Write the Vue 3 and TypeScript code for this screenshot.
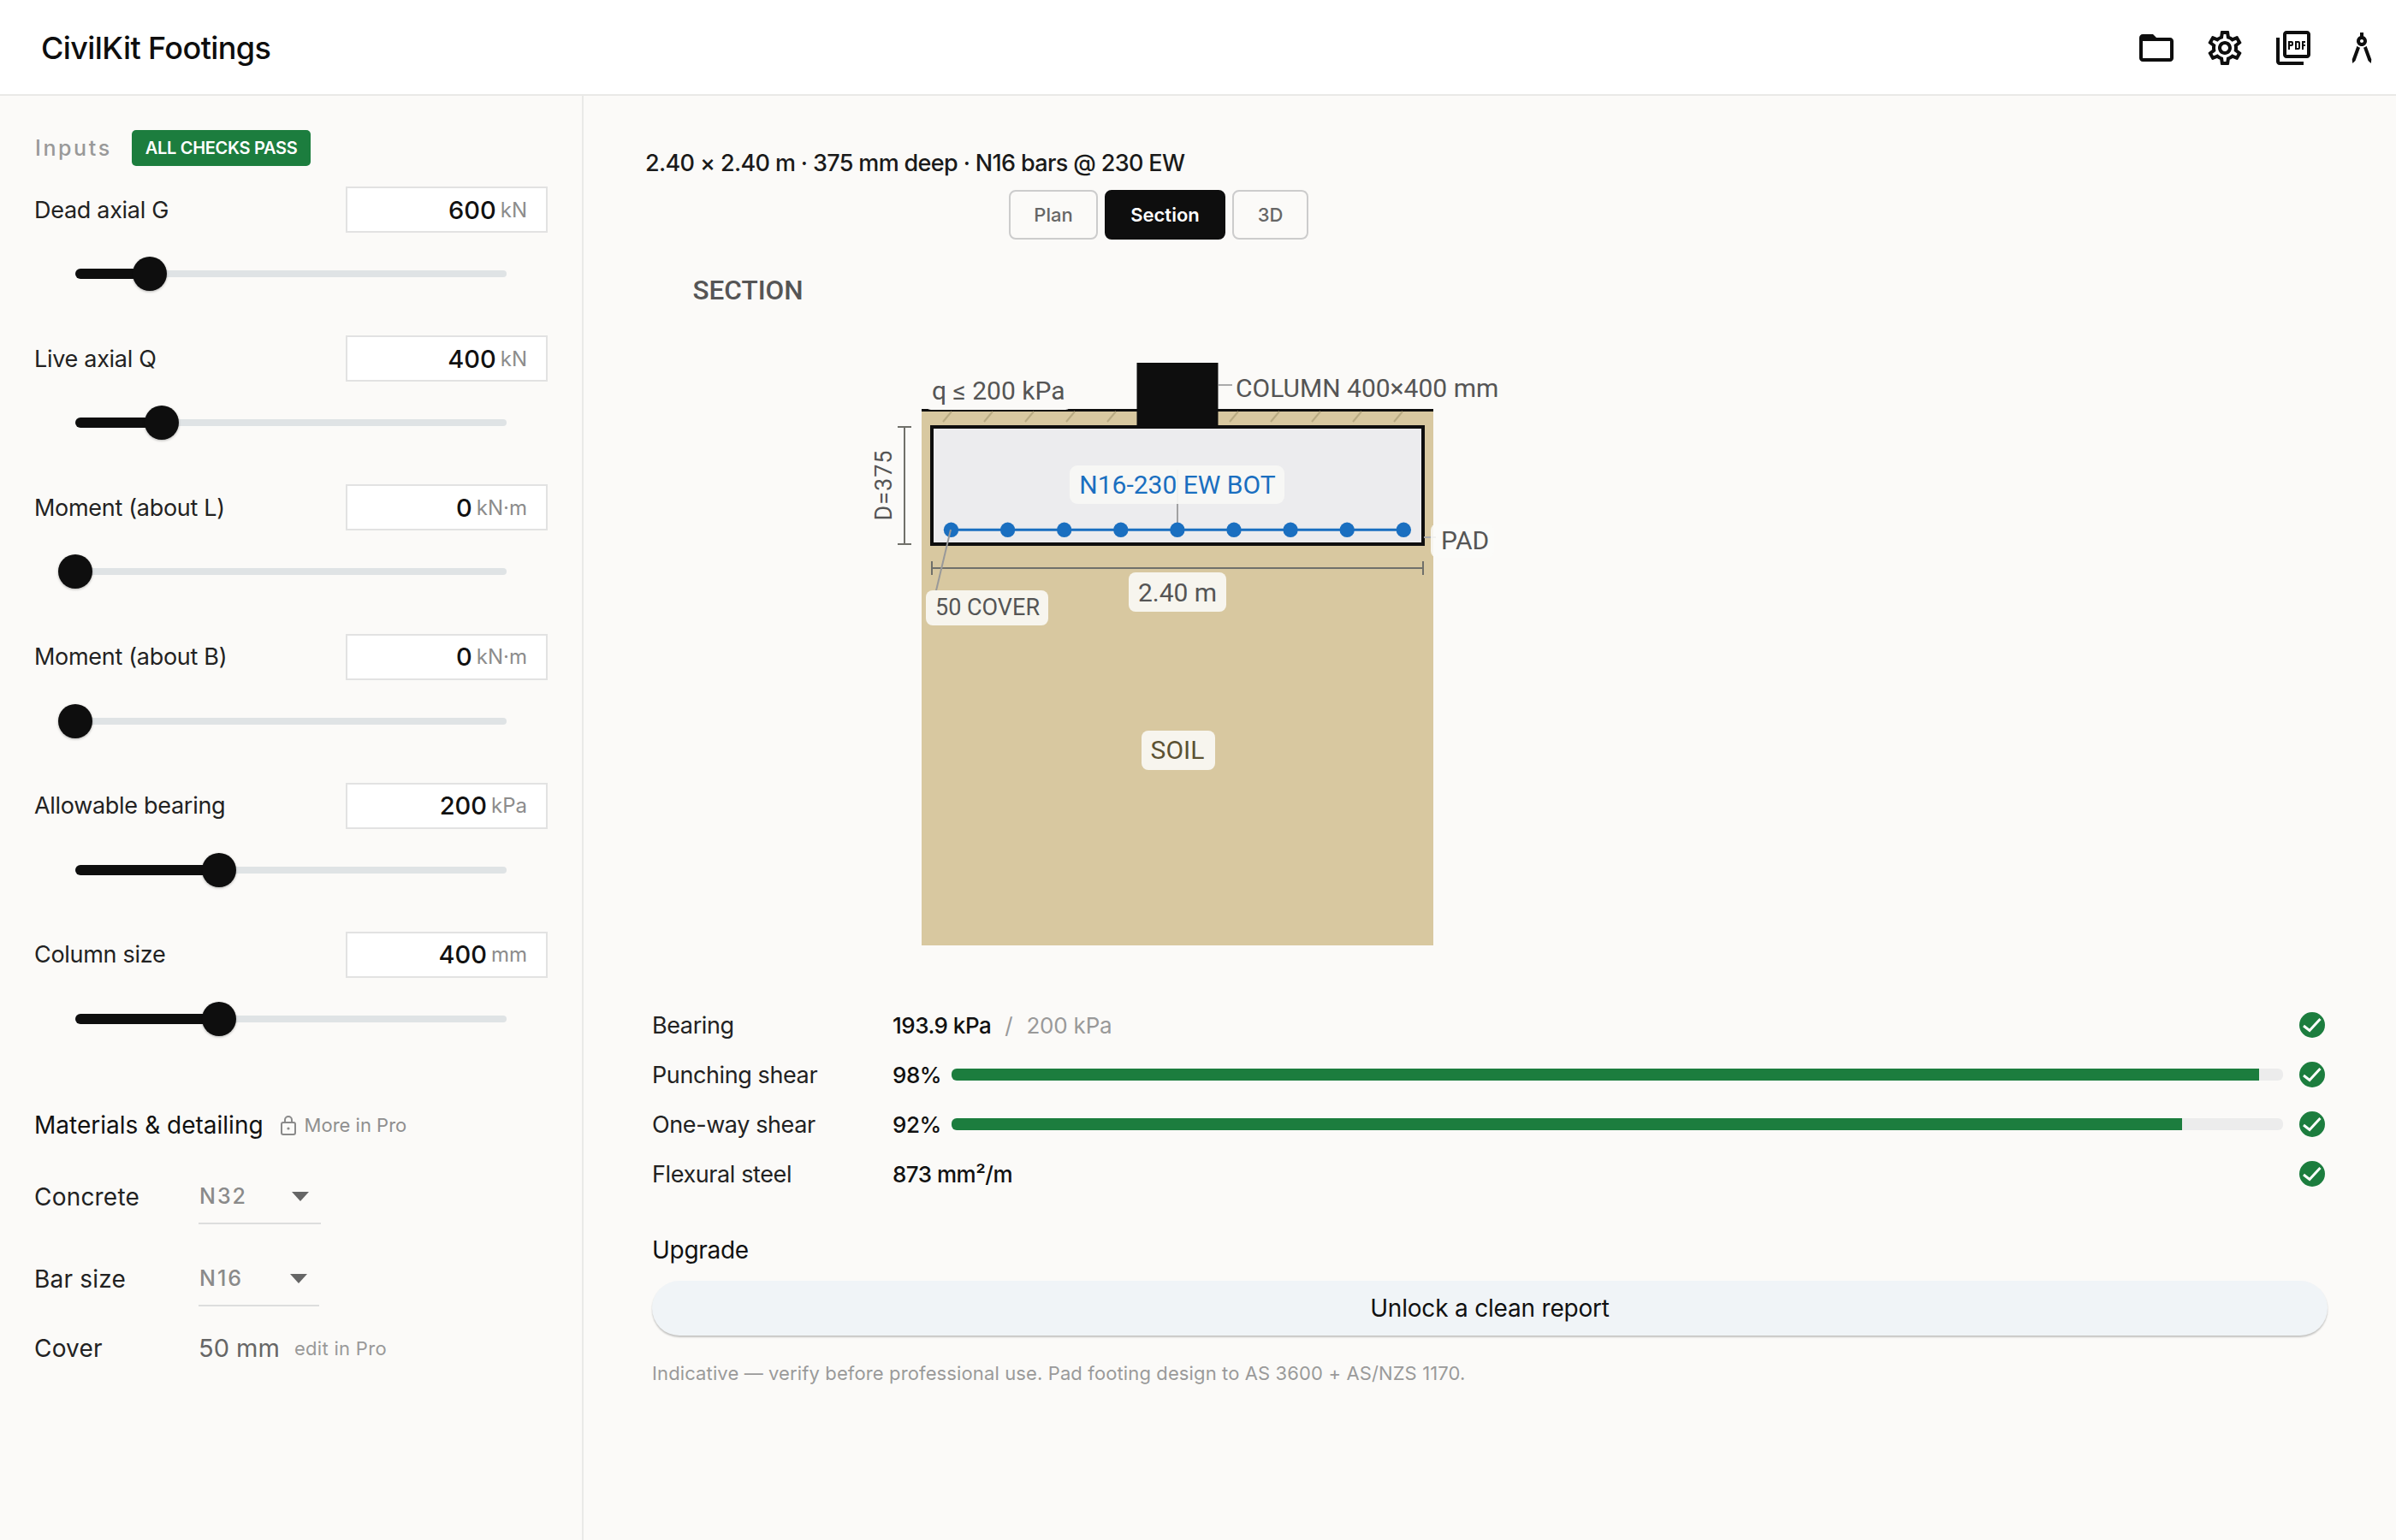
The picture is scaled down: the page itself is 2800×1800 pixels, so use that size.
<template>
  <div class="app">
    <header class="topbar">
      <h1 class="brand">CivilKit Footings</h1>
      <div class="actions">
        <svg v-for="icon in icons" :key="icon" class="action" viewBox="0 0 24 24"><path :d="icon" /></svg>
      </div>
    </header>

    <div class="body">
      <aside class="sidebar">
        <div class="inputs-head">
          <span class="inputs-title">Inputs</span>
          <span class="badge">ALL CHECKS PASS</span>
        </div>

        <div v-for="field in fields" :key="field.label" class="field">
          <div class="field-row">
            <label class="field-label">{{ field.label }}</label>
            <div class="field-box">
              <span class="field-value">{{ field.value }}</span>
              <span class="field-unit">{{ field.unit }}</span>
            </div>
          </div>
          <div class="slider">
            <div class="slider-fill" :style="{ width: field.pos + 'px' }"></div>
            <div class="slider-thumb" :style="{ left: field.pos + 'px' }"></div>
          </div>
        </div>

        <div class="materials-head">
          <span class="materials-title">Materials &amp; detailing</span>
          <svg class="lock" viewBox="0 0 18 24">
            <rect x="1" y="9" width="16" height="14" rx="2" />
            <path d="M5 9V6a4 4 0 0 1 8 0v3" />
            <circle cx="9" cy="16" r="1.6" />
          </svg>
          <span class="pro-note">More in Pro</span>
        </div>
        <div class="material concrete">
          <span class="material-label">Concrete</span>
          <div class="select select-wide"><span>N32</span><i class="caret"></i></div>
        </div>
        <div class="material bar">
          <span class="material-label">Bar size</span>
          <div class="select"><span>N16</span><i class="caret"></i></div>
        </div>
        <div class="material cover">
          <span class="material-label">Cover</span>
          <span class="cover-value">50 mm</span>
          <span class="cover-note">edit in Pro</span>
        </div>
      </aside>

      <main class="main">
        <p class="summary">2.40 × 2.40 m · 375 mm deep · N16 bars @ 230 EW</p>
        <div class="tabs">
          <button class="tab tab-plan">Plan</button>
          <button class="tab tab-active">Section</button>
          <button class="tab tab-3d">3D</button>
        </div>

        <svg class="drawing" viewBox="754 300 1200 840">
          <text x="809.5" y="350" class="d-title">SECTION</text>

          <rect x="1077" y="479" width="598" height="626" fill="#d8c8a0" />
          <line x1="1077" y1="479.5" x2="1675" y2="479.5" stroke="#0e0e0e" stroke-width="3" />
          <line v-for="x in hatches" :key="x" :x1="x" y1="493" :x2="x + 10" y2="481" stroke="#b8aa82" stroke-width="2" />

          <rect x="1081" y="440" width="171" height="39" rx="7" fill="#fbfaf8" />
          <text x="1089" y="467" class="d-label">q ≤ 200 kPa</text>

          <line x1="1424" y1="450" x2="1440" y2="450" stroke="#aaa" stroke-width="2" />
          <text x="1444" y="464" class="d-label">COLUMN 400×400 mm</text>

          <rect x="1089" y="499" width="574" height="137" fill="#ececee" stroke="#0e0e0e" stroke-width="4" />
          <rect x="1328.5" y="424" width="95" height="75" fill="#0e0e0e" />

          <line x1="1664" y1="628" x2="1678" y2="628" stroke="#aaa" stroke-width="2" />
          <rect x="1672" y="612" width="74" height="40" rx="8" fill="#fbfaf8" fill-opacity="0.88" />
          <text x="1684" y="642" class="d-label">PAD</text>

          <line x1="1376" y1="549" x2="1376" y2="619" stroke="#888" stroke-width="1.5" />
          <rect x="1250" y="544" width="251" height="45" rx="9" fill="#f7f7f5" fill-opacity="0.92" />
          <text x="1376" y="577" text-anchor="middle" class="d-label d-rebar">N16-230 EW BOT</text>

          <line x1="1111" y1="619.3" x2="1640" y2="619.3" stroke="#1a6fc0" stroke-width="3" />
          <circle v-for="x in bars" :key="x" :cx="x" cy="619.3" r="8.7" fill="#1a6fc0" />

          <g stroke="#70706a" stroke-width="2" fill="none">
            <path d="M1049 499h16M1057 499v137M1049 636h16" />
            <path d="M1089 656v16M1089 664h574M1663 656v16" />
          </g>
          <text transform="translate(1042 567) rotate(-90)" text-anchor="middle" class="d-label d-depth">D=375</text>

          <line x1="1111" y1="619" x2="1090" y2="707" stroke="#999" stroke-width="2" />
          <rect x="1082" y="690" width="143" height="41" rx="8" fill="#f7f5ee" />
          <text x="1154" y="719" text-anchor="middle" class="d-label d-cover">50 COVER</text>

          <rect x="1319" y="669" width="114" height="46" rx="8" fill="#f7f5ee" />
          <text x="1376" y="703" text-anchor="middle" class="d-label">2.40 m</text>

          <rect x="1334" y="854" width="86" height="46" rx="8" fill="#f7f5ee" />
          <text x="1376" y="887" text-anchor="middle" class="d-label d-soil">SOIL</text>
        </svg>

        <div class="checks">
          <div v-for="check in checks" :key="check.label" class="check">
            <span class="check-label">{{ check.label }}</span>
            <span class="check-value">{{ check.value }}</span>
            <span v-if="check.limit" class="check-limit"><i>/</i>{{ check.limit }}</span>
            <div v-if="check.pct" class="meter">
              <div class="meter-fill" :style="{ width: check.pct + '%' }"></div>
            </div>
            <svg class="tick" viewBox="0 0 30 30">
              <circle cx="15" cy="15" r="15" />
              <path d="M5 16l7 5.5L24.5 8" />
            </svg>
          </div>
        </div>

        <h2 class="upgrade-title">Upgrade</h2>
        <button class="upgrade">Unlock a clean report</button>
        <p class="note">Indicative — verify before professional use. Pad footing design to AS 3600 + AS/NZS 1170.</p>
      </main>
    </div>
  </div>
</template>

<script setup lang="ts">
const icons = [
  "M20 6h-8l-2-2H4c-1.1 0-1.99.9-1.99 2L2 18c0 1.1.9 2 2 2h16c1.1 0 2-.9 2-2V8c0-1.1-.9-2-2-2zm0 12H4V8h16v10z",
  "M19.43 12.98c.04-.32.07-.64.07-.98 0-.34-.03-.66-.07-.98l2.11-1.65c.19-.15.24-.42.12-.64l-2-3.46c-.09-.16-.26-.25-.44-.25-.06 0-.12.01-.17.03l-2.49 1c-.52-.4-1.08-.73-1.69-.98l-.38-2.65C14.46 2.18 14.25 2 14 2h-4c-.25 0-.46.18-.49.42l-.38 2.65c-.61.25-1.17.59-1.69.98l-2.49-1c-.06-.02-.12-.03-.18-.03-.17 0-.34.09-.43.25l-2 3.46c-.13.22-.07.49.12.64l2.11 1.65c-.04.32-.07.65-.07.98 0 .33.03.66.07.98l-2.11 1.65c-.19.15-.24.42-.12.64l2 3.46c.09.16.26.25.44.25.06 0 .12-.01.17-.03l2.49-1c.52.4 1.08.73 1.69.98l.38 2.65c.03.24.24.42.49.42h4c.25 0 .46-.18.49-.42l.38-2.65c.61-.25 1.17-.59 1.69-.98l2.49 1c.06.02.12.03.18.03.17 0 .34-.09.43-.25l2-3.46c.12-.22.07-.49-.12-.64l-2.11-1.65zm-1.98-1.71c.04.31.05.52.05.73 0 .21-.02.43-.05.73l-.14 1.13.89.7 1.08.84-.7 1.21-1.27-.51-1.04-.42-.9.68c-.43.32-.84.56-1.25.73l-1.06.43-.16 1.13-.2 1.35h-1.4l-.19-1.35-.16-1.13-1.06-.43c-.43-.18-.83-.41-1.23-.71l-.91-.7-1.06.43-1.27.51-.7-1.21 1.08-.84.89-.7-.14-1.13c-.03-.31-.05-.54-.05-.74s.02-.43.05-.73l.14-1.13-.89-.7-1.08-.84.7-1.21 1.27.51 1.04.42.9-.68c.43-.32.84-.56 1.25-.73l1.06-.43.16-1.13.2-1.35h1.39l.19 1.35.16 1.13 1.06.43c.43.18.83.41 1.23.71l.91.7 1.06-.43 1.27-.51.7 1.21-1.07.85-.89.7.14 1.13zM12 8c-2.21 0-4 1.79-4 4s1.79 4 4 4 4-1.79 4-4-1.79-4-4-4zm0 6c-1.1 0-2-.9-2-2s.9-2 2-2 2 .9 2 2-.9 2-2 2z",
  "M20 2H8c-1.1 0-2 .9-2 2v12c0 1.1.9 2 2 2h12c1.1 0 2-.9 2-2V4c0-1.1-.9-2-2-2zm0 14H8V4h12v12zM4 6H2v14c0 1.1.9 2 2 2h14v-2H4V6zm12 6V9c0-.55-.45-1-1-1h-2v5h2c.55 0 1-.45 1-1zm-2-3h1v3h-1V9zm4 2h1v-1h-1V9h1V8h-2v5h1v-2zm-8 0h1c.55 0 1-.45 1-1V9c0-.55-.45-1-1-1H9v5h1v-2zm0-2h1v1h-1V9z",
  "M6.36 18.78L6.61 21l1.62-1.54 2.77-7.6c-.68-.17-1.28-.51-1.77-.98l-2.87 7.9zM14.77 10.88c-.49.47-1.1.81-1.77.98l2.77 7.6L17.39 21l.26-2.22-2.88-7.9zM15 8c0-1.3-.84-2.4-2-2.82V3h-2v2.18C9.84 5.6 9 6.7 9 8c0 1.66 1.34 3 3 3s3-1.34 3-3zm-3 1c-.55 0-1-.45-1-1s.45-1 1-1 1 .45 1 1-.45 1-1 1z",
];

const fields = [
  { label: "Dead axial G", value: "600", unit: "kN", pos: 87 },
  { label: "Live axial Q", value: "400", unit: "kN", pos: 101 },
  { label: "Moment (about L)", value: "0", unit: "kN·m", pos: 0 },
  { label: "Moment (about B)", value: "0", unit: "kN·m", pos: 0 },
  { label: "Allowable bearing", value: "200", unit: "kPa", pos: 168 },
  { label: "Column size", value: "400", unit: "mm", pos: 168 },
];

const bars = Array.from({ length: 9 }, (_, i) => 1111.5 + i * 66.1);
const hatches = [1102, 1150, 1198, 1246, 1294, 1437, 1485, 1533, 1581, 1629];

const checks = [
  { label: "Bearing", value: "193.9 kPa", limit: "200 kPa" },
  { label: "Punching shear", value: "98%", pct: 98.2 },
  { label: "One-way shear", value: "92%", pct: 92.4 },
  { label: "Flexural steel", value: "873 mm²/m" },
];
</script>

<style>
html,
body {
  margin: 0;
  background: #fbfaf8;
}
</style>

<style scoped>
.app {
  width: 2800px;
  height: 1800px;
  display: flex;
  flex-direction: column;
  font-family: Inter, "Noto Sans", sans-serif;
  color: #111;
  overflow: hidden;
}
.topbar {
  height: 108px;
  flex: none;
  display: flex;
  align-items: center;
  justify-content: space-between;
  padding: 2px 16px 0 48px;
  background: #fff;
  border-bottom: 2px solid #e9e9e7;
}
.brand {
  margin: 0;
  font-size: 36px;
  font-weight: 500;
  letter-spacing: -0.6px;
  color: #0e0e0e;
}
.actions {
  display: flex;
  gap: 32px;
}
.action {
  width: 48px;
  height: 48px;
  fill: #0e0e0e;
}
.body {
  flex: 1;
  display: flex;
  min-height: 0;
}
.sidebar {
  width: 682px;
  box-sizing: border-box;
  flex: none;
  padding: 40px 40px 0;
  border-right: 2px solid #e9e9e7;
}
.inputs-head {
  display: flex;
  align-items: center;
  gap: 23px;
  height: 42px;
}
.inputs-title {
  margin-left: 1px;
  font-size: 25px;
  font-weight: 500;
  letter-spacing: 2.6px;
  color: #999;
}
.badge {
  display: flex;
  align-items: center;
  height: 42px;
  padding: 0 16px;
  border-radius: 5px;
  background: #1c7d3e;
  color: #fff;
  font-size: 20px;
  font-weight: 600;
  letter-spacing: -0.3px;
}
.field {
  height: 174.2px;
  padding-top: 24px;
  box-sizing: border-box;
}
.field-row {
  display: flex;
  align-items: center;
  justify-content: space-between;
  height: 54px;
}
.field-label {
  font-size: 27px;
  letter-spacing: -0.3px;
  color: #222;
}
.field-box {
  width: 236px;
  height: 54px;
  box-sizing: border-box;
  border: 2px solid #e2e2e2;
  background: #fff;
  display: flex;
  align-items: center;
  justify-content: flex-end;
  gap: 5px;
  padding-right: 22px;
}
.field-value {
  font-size: 29px;
  font-weight: 500;
  color: #111;
}
.field-unit {
  font-size: 24px;
  color: #8c8c8c;
}
.slider {
  position: relative;
  margin: 44px 0 0 48px;
  width: 504px;
  height: 8px;
  border-radius: 4px;
  background: #dfe3e5;
}
.slider-fill {
  position: absolute;
  left: 0;
  top: -2px;
  height: 12px;
  border-radius: 6px;
  background: #0e0e0e;
}
.slider-thumb {
  position: absolute;
  top: -16px;
  width: 40px;
  height: 40px;
  margin-left: -20px;
  border-radius: 50%;
  background: #0e0e0e;
  box-shadow: 0 1px 3px rgba(0, 0, 0, 0.3);
}
.materials-head {
  display: flex;
  align-items: center;
  margin-top: 56px;
  height: 40px;
}
.materials-title {
  font-size: 28px;
  color: #111;
}
.lock {
  width: 18px;
  height: 24px;
  margin: 0 10px 0 20px;
  fill: none;
  stroke: #8a8a8a;
  stroke-width: 2;
}
.lock circle {
  fill: #8a8a8a;
  stroke: none;
}
.pro-note {
  font-size: 22px;
  color: #8f8f8f;
}
.material {
  display: flex;
  align-items: center;
}
.material-label {
  width: 192px;
  font-size: 28px;
  letter-spacing: 0.2px;
  color: #222;
}
.concrete {
  margin-top: 32px;
}
.bar {
  margin-top: 32px;
}
.cover {
  margin-top: 31px;
}
.select {
  width: 141px;
  height: 64px;
  box-sizing: border-box;
  border-bottom: 2px solid #ddd;
  display: flex;
  align-items: center;
  justify-content: space-between;
  padding: 0 14px 0 1px;
  font-size: 25px;
  font-weight: 500;
  letter-spacing: 2px;
  color: #8a8a8a;
}
.select-wide {
  width: 143px;
}
.caret {
  width: 0;
  height: 0;
  border-left: 10px solid transparent;
  border-right: 10px solid transparent;
  border-top: 11px solid #666;
}
.cover-value {
  font-size: 29px;
  color: #666;
}
.cover-note {
  margin-left: 17px;
  font-size: 22px;
  letter-spacing: 0.3px;
  color: #999;
}
.main {
  flex: 1;
  min-width: 0;
  padding: 62px 0 0 72px;
  box-sizing: border-box;
  background: #fbfaf8;
}
.summary {
  margin: 0;
  height: 34px;
  line-height: 34px;
  font-size: 27px;
  font-weight: 500;
  letter-spacing: -0.64px;
  color: #1a1a1a;
}
.tabs {
  width: 1200px;
  display: flex;
  justify-content: center;
  gap: 8px;
  margin-top: 14px;
}
.tab {
  height: 58px;
  box-sizing: border-box;
  border: 2px solid #ccc;
  border-radius: 8px;
  background: transparent;
  font: 500 22px Inter, sans-serif;
  color: #666;
  padding: 0;
}
.tab-plan {
  width: 104px;
}
.tab-3d {
  width: 89px;
}
.tab-active {
  width: 141px;
  background: #0e0e0e;
  border-color: #0e0e0e;
  color: #fff;
  font-weight: 600;
}
.drawing {
  display: block;
  width: 1200px;
  height: 840px;
  margin-top: 20px;
}
.d-title {
  font: 500 31.5px Roboto, sans-serif;
  fill: #555;
}
.d-label {
  font: 400 30px Roboto, sans-serif;
  fill: #555;
}
.d-rebar {
  fill: #1a6fc0;
}
.d-depth {
  font-size: 27px;
  letter-spacing: 1px;
}
.d-cover {
  font-size: 27px;
}
.d-soil {
  fill: #5c5233;
}
.checks {
  margin: 29px 0 0 8px;
  width: 1955px;
}
.check {
  height: 58px;
  display: flex;
  align-items: center;
}
.check-label {
  width: 281px;
  flex: none;
  font-size: 27px;
  letter-spacing: -0.4px;
  color: #222;
}
.check-value {
  font-size: 26px;
  font-weight: 500;
  letter-spacing: -0.5px;
  color: #111;
}
.check-limit {
  font-size: 26px;
  letter-spacing: -0.2px;
  color: #999;
}
.check-limit i {
  margin: 0 16px;
  font-style: normal;
}
.meter {
  flex: 1;
  height: 14px;
  margin-left: 12px;
  border-radius: 6px;
  background: #ececec;
  overflow: hidden;
}
.meter-fill {
  height: 100%;
  background: #1c7d3e;
}
.tick {
  width: 30px;
  height: 30px;
  margin-left: auto;
  flex: none;
  fill: #1c7d3e;
}
.meter + .tick {
  margin-left: 19px;
}
.tick path {
  fill: none;
  stroke: #fff;
  stroke-width: 3;
}
.upgrade-title {
  margin: 40px 0 0 8px;
  font-size: 28px;
  font-weight: 400;
  letter-spacing: -0.3px;
  line-height: 40px;
  color: #111;
}
.upgrade {
  display: block;
  width: 1958px;
  height: 64px;
  margin: 16px 0 0 8px;
  border: none;
  border-radius: 32px;
  background: #f0f4f7;
  box-shadow: 0 2px 2px rgba(0, 0, 0, 0.22);
  font: 400 28px Inter, sans-serif;
  letter-spacing: -0.2px;
  color: #111;
}
.note {
  margin: 29px 0 0 8px;
  font-size: 22px;
  letter-spacing: 0.12px;
  line-height: 30px;
  color: #9a9a9a;
}
</style>
